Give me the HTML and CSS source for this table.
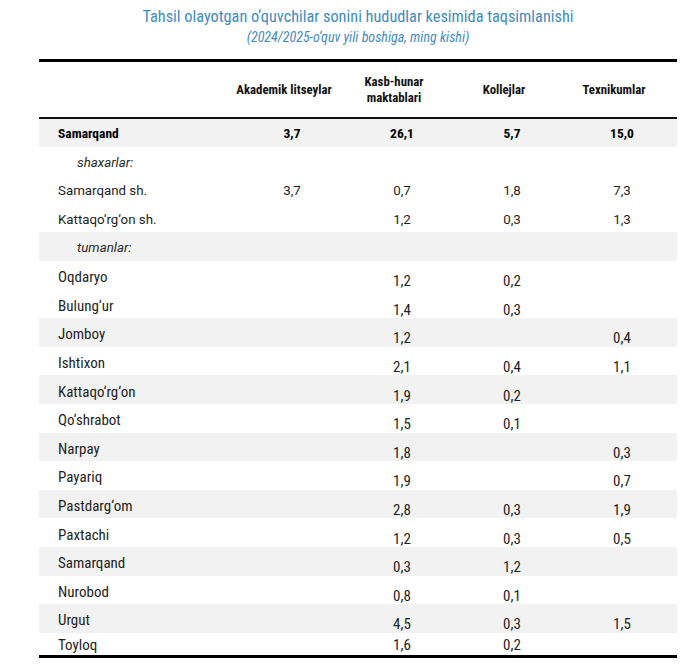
FILE: index.html
```html
<!DOCTYPE html>
<html lang="uz">
<head>
<meta charset="utf-8">
<title>Tahsil olayotgan o‘quvchilar</title>
<link rel="stylesheet" href="styles.css">
</head>
<body>
<div class="wrap">
  <h1 class="title">Tahsil olayotgan o‘quvchilar sonini hududlar kesimida taqsimlanishi</h1>
  <p class="subtitle">(2024/2025-o‘quv yili boshiga, ming kishi)</p>
  <table class="data">
    <colgroup>
      <col class="c-label"><col class="c-num"><col class="c-num"><col class="c-num"><col class="c-last">
    </colgroup>
    <thead>
      <tr>
        <th></th>
        <th>Akademik litseylar</th>
        <th>Kasb-hunar<br>maktablari</th>
        <th>Kollejlar</th>
        <th class="h-last">Texnikumlar</th>
      </tr>
    </thead>
    <tbody class="top">
      <tr class="total shade"><td>Samarqand</td><td>3,7</td><td>26,1</td><td>5,7</td><td class="last">15,0</td></tr>
      <tr class="sub"><td>shaxarlar:</td><td></td><td></td><td></td><td class="last"></td></tr>
      <tr><td>Samarqand sh.</td><td>3,7</td><td>0,7</td><td>1,8</td><td class="last">7,3</td></tr>
      <tr><td>Kattaqo‘rg‘on sh.</td><td></td><td>1,2</td><td>0,3</td><td class="last">1,3</td></tr>
      <tr class="sub shade"><td>tumanlar:</td><td></td><td></td><td></td><td class="last"></td></tr>
    </tbody>
    <tbody class="districts">
      <tr><td>Oqdaryo</td><td></td><td>1,2</td><td>0,2</td><td class="last"></td></tr>
      <tr><td>Bulung‘ur</td><td></td><td>1,4</td><td>0,3</td><td class="last"></td></tr>
      <tr class="shade"><td>Jomboy</td><td></td><td>1,2</td><td></td><td class="last">0,4</td></tr>
      <tr><td>Ishtixon</td><td></td><td>2,1</td><td>0,4</td><td class="last">1,1</td></tr>
      <tr class="shade"><td>Kattaqo‘rg‘on</td><td></td><td>1,9</td><td>0,2</td><td class="last"></td></tr>
      <tr><td>Qo‘shrabot</td><td></td><td>1,5</td><td>0,1</td><td class="last"></td></tr>
      <tr class="shade"><td>Narpay</td><td></td><td>1,8</td><td></td><td class="last">0,3</td></tr>
      <tr><td>Payariq</td><td></td><td>1,9</td><td></td><td class="last">0,7</td></tr>
      <tr class="shade"><td>Pastdarg‘om</td><td></td><td>2,8</td><td>0,3</td><td class="last">1,9</td></tr>
      <tr><td>Paxtachi</td><td></td><td>1,2</td><td>0,3</td><td class="last">0,5</td></tr>
      <tr class="shade"><td>Samarqand</td><td></td><td>0,3</td><td>1,2</td><td class="last"></td></tr>
      <tr><td>Nurobod</td><td></td><td>0,8</td><td>0,1</td><td class="last"></td></tr>
      <tr class="shade"><td>Urgut</td><td></td><td>4,5</td><td>0,3</td><td class="last">1,5</td></tr>
      <tr class="final"><td>Toyloq</td><td></td><td>1,6</td><td>0,2</td><td class="last"></td></tr>
    </tbody>
  </table>
</div>
</body>
</html>
```

FILE: styles.css
```css
html, body {
  margin: 0;
  padding: 0;
  background: #ffffff;
}

body {
  font-family: Roboto, "Liberation Sans", sans-serif;
  font-stretch: 75%;
  color: #1e1e1e;
}

.wrap {
  margin-left: 39px;
  width: 638px;
}

.title {
  margin: 7px 0 0;
  font-size: 16.3px;
  line-height: 20px;
  font-weight: 400;
  color: #3f8cbd;
  text-align: center;
}

.subtitle {
  margin: 0;
  padding-top: 2px;
  font-size: 14px;
  line-height: 16px;
  font-style: italic;
  color: #3f8cbd;
  text-align: center;
}

.data {
  margin-top: 14px;
  width: 638px;
  border-collapse: collapse;
  table-layout: fixed;
  border-top: 3px solid #000;
  border-bottom: 3px solid #000;
}

.c-label { width: 190px; }
.c-num { width: 110px; }
.c-last { width: 118px; }

.data th {
  height: 55px;
  padding: 0;
  font-size: 12.8px;
  line-height: 16px;
  font-weight: 700;
  color: #111;
  text-align: center;
  vertical-align: middle;
  border-bottom: 2px solid #111;
}

.data th.h-last {
  padding-right: 8px;
}

.data td {
  box-sizing: border-box;
  height: 28.6px;
  padding: 0 0 0 16px;
  font-size: 13px;
  line-height: 16px;
  text-align: center;
  vertical-align: middle;
}

.data td:first-child {
  padding-left: 19px;
  text-align: left;
}

.data td.last {
  padding-right: 8px;
}

.top td {
  font-stretch: 100%;
  font-size: 13.3px;
  padding-top: 4px;
}

.top td:first-child {
  padding-top: 4px;
}

.shade td {
  background: #f2f2f2;
}

.top .total td {
  padding-top: 0;
  font-stretch: 75%;
  font-size: 13.5px;
  font-weight: 700;
  color: #000;
}

.sub td:first-child {
  padding-left: 38px;
  font-style: italic;
  color: #2a2a2a;
}

.top .sub.shade td {
  padding-top: 2px;
}

.districts td {
  padding-top: 12px;
  font-size: 15px;
  line-height: 14px;
}

.districts td:first-child {
  padding-top: 4px;
}

.districts tr.final td {
  height: 24px;
  padding-top: 2px;
}
```
